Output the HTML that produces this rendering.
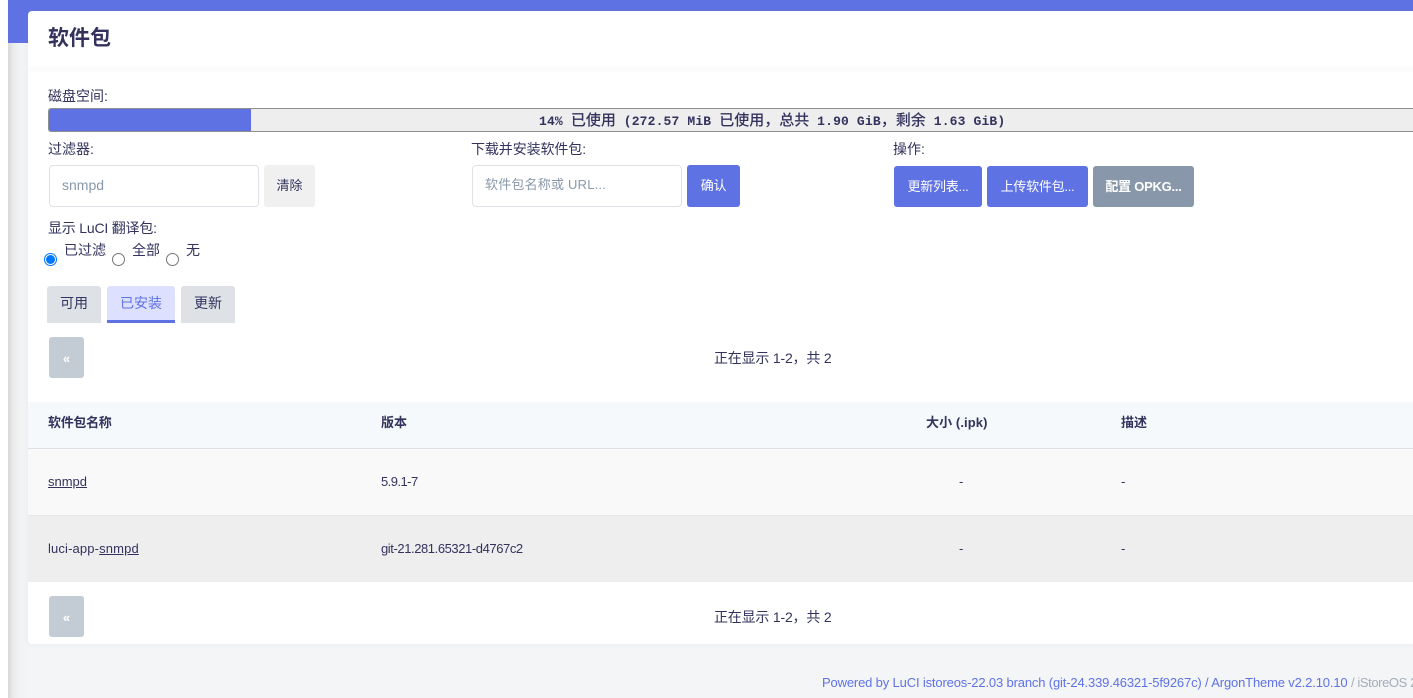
<!DOCTYPE html>
<html lang="zh-CN"><head><meta charset="utf-8"><title>软件包</title>
<style>
html,body{margin:0;padding:0;width:1413px;height:698px;overflow:hidden;background:#f4f5f7;}
body{position:relative;font-family:"Liberation Sans","Noto Sans CJK SC",sans-serif;font-size:13px;color:#32325d;}
div,a{position:absolute;box-sizing:border-box;white-space:nowrap;}
.t{line-height:18px;height:18px;}
.l{font-size:14px;}
.btn{border-radius:3px;text-align:center;color:#fff;background:#5e72e4;font-size:13px;line-height:41px;height:42px;letter-spacing:-.25px;}
.row{left:28px;width:1385px;}
.radio{width:13px;height:13px;border-radius:50%;border:1px solid #767676;background:#fff;}
.tab{top:286px;height:37px;background:#dee2e6;border-radius:3px 3px 0 0;text-align:center;line-height:34px;font-size:14px;color:#32325d;}
.pg{left:49px;width:35px;height:41px;background:#c3cbd4;border-radius:3px;color:#fff;text-align:center;font-size:13px;line-height:43px;font-weight:bold;}
.m{font-family:"Liberation Mono","Noto Serif CJK SC",monospace;font-weight:bold;font-size:13px;line-height:18px;color:#32325d;letter-spacing:.15px;}
.m span{font-family:"Noto Sans CJK SC",sans-serif;font-size:15px;font-weight:500;letter-spacing:0;}
</style></head><body>
<div style="left:0;top:0;width:8px;height:698px;background:#fff"></div>
<div style="left:8px;top:0;width:20px;height:698px;background:linear-gradient(90deg,#d8d9db 0,#eceded 6px,#f2f3f5 12px,#f4f5f7 20px)"></div>
<div style="left:8px;top:0;width:1405px;height:43px;background:#5e72e4"></div>
<div style="left:28px;top:11px;width:1385px;height:633px;background:#fff;border-radius:4px 0 0 4px;box-shadow:0 0 6px rgba(136,152,170,.12)"></div>
<div style="left:28px;top:66px;width:1385px;height:6px;background:#fcfcfd"></div>

<div style="left:48px;top:25px;font-size:21px;line-height:28px;font-weight:bold;color:#32325d">软件包</div>

<div class="t l" style="left:48px;top:87px">磁盘空间:</div>
<div style="left:48px;top:108px;width:1365px;height:24px;background:#eee;border:1px solid #8e8e8e;border-right:0;border-radius:3px 0 0 3px"></div>
<div style="left:49px;top:109px;width:202px;height:22px;background:#5e72e4;border-radius:2px 0 0 2px"></div>
<div class="m" style="left:539px;top:111px">14% <span>已使用</span> (272.57 MiB <span>已使用，总共</span> 1.90 GiB<span>，剩余</span> 1.63 GiB)</div>

<div class="t l" style="left:48px;top:140px">过滤器:</div>
<div class="t l" style="left:471px;top:140px;letter-spacing:-.1px">下载并安装软件包:</div>
<div class="t l" style="left:893px;top:140px">操作:</div>

<div style="left:49px;top:165px;width:210px;height:42px;background:#fff;border:1px solid #dee2e6;border-radius:4px"></div>
<div style="left:62px;top:175px;font-size:14px;line-height:20px;color:#8898aa">snmpd</div>
<div style="left:264px;top:165px;width:51px;height:42px;background:#f0f0f0;border-radius:3px;text-align:center;line-height:41px;font-size:13px;color:#32325d">清除</div>

<div style="left:472px;top:165px;width:210px;height:42px;background:#fff;border:1px solid #dee2e6;border-radius:4px"></div>
<div style="left:485px;top:175px;font-size:13px;line-height:20px;color:#8898aa;letter-spacing:.2px">软件包名称或 URL...</div>
<div class="btn" style="left:687px;top:165px;width:53px">确认</div>

<div class="btn" style="left:894px;top:166px;width:88px;height:41px">更新列表...</div>
<div class="btn" style="left:987px;top:166px;width:101px;height:41px">上传软件包...</div>
<div class="btn" style="left:1093px;top:166px;width:101px;height:41px;background:#8898aa;font-weight:bold;letter-spacing:-.25px">配置 OPKG...</div>

<div class="t l" style="left:48px;top:219px;letter-spacing:-.2px">显示 LuCI 翻译包:</div>
<div style="left:44px;top:253px;width:13px;height:13px;border-radius:50%;background:#fff;border:1px solid #0075ff"></div>
<div style="left:46px;top:255px;width:9px;height:9px;border-radius:50%;background:#0075ff"></div>
<div class="t l" style="left:64px;top:241px">已过滤</div>
<div class="radio" style="left:112px;top:253px"></div>
<div class="t l" style="left:132px;top:241px">全部</div>
<div class="radio" style="left:166px;top:253px"></div>
<div class="t l" style="left:186px;top:241px">无</div>

<div class="tab" style="left:47px;width:54px">可用</div>
<div class="tab" style="left:107px;width:68px;background:#dde0ff;color:#5e72e4;border-bottom:3px solid #5e72e4">已安装</div>
<div class="tab" style="left:181px;width:54px">更新</div>

<div class="pg" style="top:337px">«</div>
<div class="t l" style="left:714px;top:349px;letter-spacing:-.2px">正在显示 1-2，共 2</div>

<div class="row" style="top:402px;height:47px;background:#f6f9fc;border-bottom:1px solid #dde0e5"></div>
<div class="t" style="left:48px;top:414px;font-weight:bold;letter-spacing:-.3px">软件包名称</div>
<div class="t" style="left:381px;top:414px;font-weight:bold">版本</div>
<div class="t" style="left:926px;top:414px;font-weight:bold;letter-spacing:.1px">大小 (.ipk)</div>
<div class="t" style="left:1121px;top:414px;font-weight:bold">描述</div>

<div class="row" style="top:449px;height:67px;background:#f9f9fa;border-bottom:1px solid #e4e5e7"></div>
<div class="t" style="left:48px;top:473px;text-decoration:underline">snmpd</div>
<div class="t" style="left:381px;top:473px;letter-spacing:-.55px">5.9.1-7</div>
<div class="t" style="left:959px;top:473px">-</div>
<div class="t" style="left:1121px;top:473px">-</div>

<div class="row" style="top:516px;height:66px;background:#eeeeef"></div>
<div class="t" style="left:48px;top:540px;letter-spacing:.14px">luci-app-<span style="text-decoration:underline">snmpd</span></div>
<div class="t" style="left:381px;top:540px;letter-spacing:-.42px">git-21.281.65321-d4767c2</div>
<div class="t" style="left:959px;top:540px">-</div>
<div class="t" style="left:1121px;top:540px">-</div>

<div class="pg" style="top:596px">«</div>
<div class="t l" style="left:714px;top:608px;letter-spacing:-.2px">正在显示 1-2，共 2</div>

<div class="t" style="left:822px;top:674px;color:#5e72e4;letter-spacing:-.155px">Powered by LuCI istoreos-22.03 branch (git-24.339.46321-5f9267c) / ArgonTheme v2.2.10.10 <span style="color:#a5adb8;letter-spacing:-.4px">/ iStoreOS 22</span></div>
</body></html>
